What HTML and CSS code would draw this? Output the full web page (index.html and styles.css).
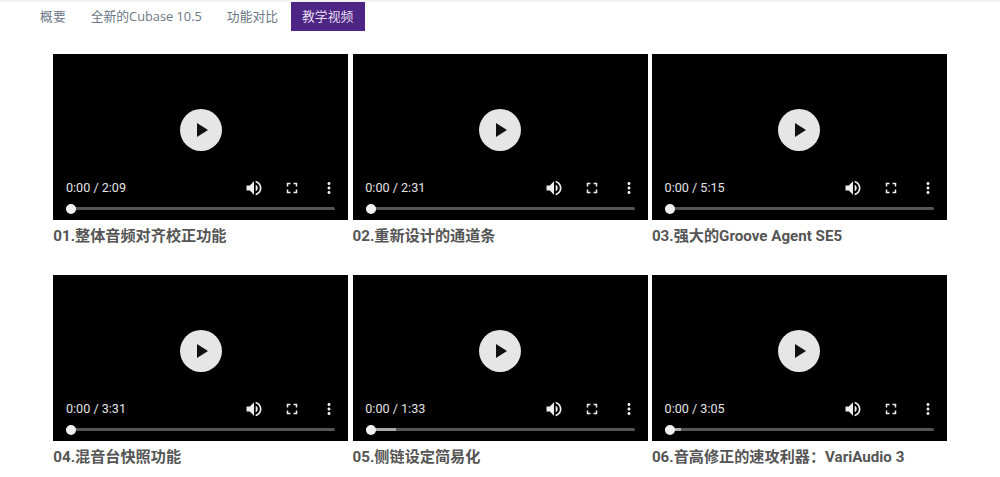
FILE: index.html

```html
<!DOCTYPE html>
<html lang="zh-CN">
<head>
    <meta charset="UTF-8">
    <title>Cubase 10.5</title>
    <link rel="stylesheet" href="styles.css">
</head>
<body>
    <svg class="icon-defs" width="0" height="0">
        <symbol id="icon-play" viewBox="0 0 24 24"><path d="M8 5v14l11-7z"/></symbol>
        <symbol id="icon-volume" viewBox="0 0 24 24"><path d="M3 9v6h4l5 5V4L7 9H3zm13.5 3c0-1.77-1.02-3.29-2.5-4.03v8.05c1.48-.73 2.5-2.25 2.5-4.02zM14 3.23v2.06c2.89.86 5 3.54 5 6.71s-2.11 5.85-5 6.71v2.06c4.01-.91 7-4.49 7-8.77s-2.99-7.86-7-8.77z"/></symbol>
        <symbol id="icon-full" viewBox="0 0 24 24"><path d="M7 14H5v5h5v-2H7v-3zm-2-4h2V7h3V5H5v5zm12 7h-3v2h5v-5h-2v3zM14 5v2h3v3h2V5h-5z"/></symbol>
        <symbol id="icon-more" viewBox="0 0 24 24"><path d="M12 8c1.1 0 2-.9 2-2s-.9-2-2-2-2 .9-2 2 .9 2 2 2zm0 2c-1.1 0-2 .9-2 2s.9 2 2 2 2-.9 2-2-.9-2-2-2zm0 6c-1.1 0-2 .9-2 2s.9 2 2 2 2-.9 2-2-.9-2-2-2z"/></symbol>
    </svg>

    <nav class="tabs">
        <a class="tab">概要</a>
        <a class="tab">全新的Cubase 10.5</a>
        <a class="tab">功能对比</a>
        <a class="tab active">教学视频</a>
    </nav>

    <div class="video-grid">
        <div class="video-item">
            <div class="player">
                <div class="play-area"><span class="play-btn"><svg><use href="#icon-play"/></svg></span></div>
                <div class="controls">
                    <span class="time">0:00 / 2:09</span>
                    <svg class="ctrl vol"><use href="#icon-volume"/></svg>
                    <svg class="ctrl full"><use href="#icon-full"/></svg>
                    <svg class="ctrl more"><use href="#icon-more"/></svg>
                </div>
                <div class="track"><span class="buffered" style="width: 10px"></span><span class="thumb"></span></div>
            </div>
            <h3>01.整体音频对齐校正功能</h3>
        </div>
        <div class="video-item">
            <div class="player">
                <div class="play-area"><span class="play-btn"><svg><use href="#icon-play"/></svg></span></div>
                <div class="controls">
                    <span class="time">0:00 / 2:31</span>
                    <svg class="ctrl vol"><use href="#icon-volume"/></svg>
                    <svg class="ctrl full"><use href="#icon-full"/></svg>
                    <svg class="ctrl more"><use href="#icon-more"/></svg>
                </div>
                <div class="track"><span class="buffered" style="width: 10px"></span><span class="thumb"></span></div>
            </div>
            <h3>02.重新设计的通道条</h3>
        </div>
        <div class="video-item">
            <div class="player">
                <div class="play-area"><span class="play-btn"><svg><use href="#icon-play"/></svg></span></div>
                <div class="controls">
                    <span class="time">0:00 / 5:15</span>
                    <svg class="ctrl vol"><use href="#icon-volume"/></svg>
                    <svg class="ctrl full"><use href="#icon-full"/></svg>
                    <svg class="ctrl more"><use href="#icon-more"/></svg>
                </div>
                <div class="track"><span class="buffered" style="width: 8px"></span><span class="thumb"></span></div>
            </div>
            <h3>03.强大的Groove Agent SE5</h3>
        </div>
        <div class="video-item">
            <div class="player">
                <div class="play-area"><span class="play-btn"><svg><use href="#icon-play"/></svg></span></div>
                <div class="controls">
                    <span class="time">0:00 / 3:31</span>
                    <svg class="ctrl vol"><use href="#icon-volume"/></svg>
                    <svg class="ctrl full"><use href="#icon-full"/></svg>
                    <svg class="ctrl more"><use href="#icon-more"/></svg>
                </div>
                <div class="track"><span class="buffered" style="width: 10px"></span><span class="thumb"></span></div>
            </div>
            <h3>04.混音台快照功能</h3>
        </div>
        <div class="video-item">
            <div class="player">
                <div class="play-area"><span class="play-btn"><svg><use href="#icon-play"/></svg></span></div>
                <div class="controls">
                    <span class="time">0:00 / 1:33</span>
                    <svg class="ctrl vol"><use href="#icon-volume"/></svg>
                    <svg class="ctrl full"><use href="#icon-full"/></svg>
                    <svg class="ctrl more"><use href="#icon-more"/></svg>
                </div>
                <div class="track"><span class="buffered" style="width: 30px"></span><span class="thumb"></span></div>
            </div>
            <h3>05.侧链设定简易化</h3>
        </div>
        <div class="video-item">
            <div class="player">
                <div class="play-area"><span class="play-btn"><svg><use href="#icon-play"/></svg></span></div>
                <div class="controls">
                    <span class="time">0:00 / 3:05</span>
                    <svg class="ctrl vol"><use href="#icon-volume"/></svg>
                    <svg class="ctrl full"><use href="#icon-full"/></svg>
                    <svg class="ctrl more"><use href="#icon-more"/></svg>
                </div>
                <div class="track"><span class="buffered" style="width: 16px"></span><span class="thumb"></span></div>
            </div>
            <h3>06.音高修正的速攻利器：VariAudio 3</h3>
        </div>
    </div>
</body>
</html>
```

FILE: styles.css

```css
/* Reset & Base */
* {
    box-sizing: border-box;
    margin: 0;
    padding: 0;
}
body {
    font-family: Roboto, "Noto Sans CJK SC", sans-serif;
    background: #fff;
    color: #555;
    height: 477px;
    overflow: hidden;
}
.icon-defs {
    display: block;
    height: 0;
}
/* Tabs */
.tabs {
    display: flex;
    height: 31px;
    padding-left: 27.6px;
    border-top: 2px solid #f2f2f2;
    font-family: "Open Sans", "Noto Sans CJK SC", sans-serif;
    font-size: 12.8px;
}
.tab {
    padding: 0 12.5px;
    line-height: 29px;
    color: #6b7785;
}
.tab.active {
    background: #4d2584;
    color: #e6deef;
    padding: 0 11.5px;
}
/* Video grid */
.video-grid {
    display: grid;
    grid-template-columns: repeat(3, 295px);
    column-gap: 4.3px;
    row-gap: 20px;
    padding: 23px 0 0 53.3px;
}
.video-item h3 {
    height: 35px;
    padding-top: 6px;
    font-size: 15.15px;
    line-height: 20px;
    font-weight: 700;
    color: #555;
    white-space: nowrap;
}
/* Player */
.player {
    height: 166px;
    background: #000;
    color: #e4e4e4;
    display: flex;
    flex-direction: column;
}
.play-area {
    height: 109px;
    padding-top: 55px;
    display: flex;
    justify-content: center;
}
.play-btn {
    width: 42px;
    height: 42px;
    border-radius: 50%;
    background: #e6e6e6;
    display: flex;
    align-items: center;
    justify-content: center;
    flex-shrink: 0;
}
.play-btn svg {
    width: 24px;
    height: 24px;
    fill: #111;
}
.controls {
    display: flex;
    align-items: center;
    height: 30px;
    padding: 0 8px 0 12.7px;
    margin-top: 10px;
}
.time {
    font-size: 12.6px;
    flex: 1;
    margin-bottom: 2px;
}
.ctrl {
    width: 18px;
    height: 18px;
    fill: #eee;
}
.vol {
    width: 20px;
    height: 20px;
    margin-right: 19px;
}
.full {
    margin-right: 19px;
}
.more {
    margin-right: 2px;
}
/* Progress */
.track {
    position: relative;
    height: 3px;
    margin: 4px 13px 0 13px;
    background: #555;
    border-radius: 2px;
}
.buffered {
    display: block;
    height: 3px;
    background: #aaa;
}
.thumb {
    position: absolute;
    left: 0;
    top: -3px;
    width: 10px;
    height: 10px;
    border-radius: 50%;
    background: #f1f1f1;
}
```
